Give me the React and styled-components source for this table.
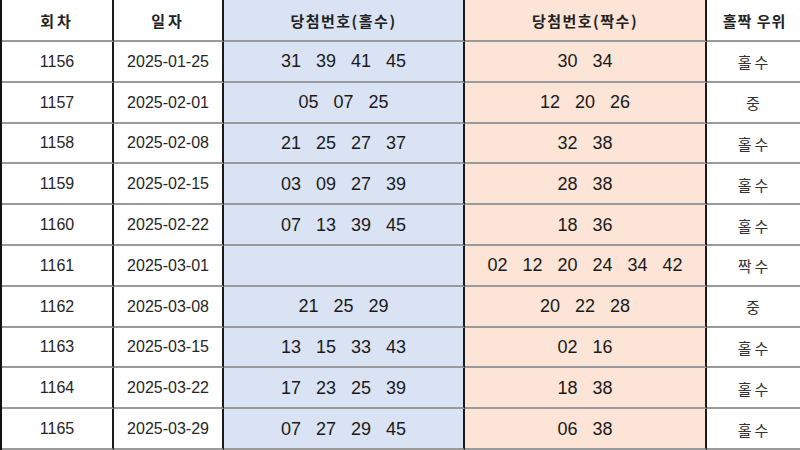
import React from "react";
import styled, { createGlobalStyle } from "styled-components";

const Global = createGlobalStyle`
  html, body { margin: 0; padding: 0; background: #ffffff; }
  body { font-family: "Liberation Sans", "Noto Sans CJK KR", sans-serif; }
`;

const Table = styled.div`
  width: 800px;
  height: 450px;
  display: grid;
  grid-template-columns: 112px 110px 241px 242px 95px;
  grid-template-rows: 42px repeat(10, 1fr);
  box-sizing: border-box;
  border-left: 2px solid #111;
  overflow: hidden;
`;

const Cell = styled.div`
  display: flex;
  align-items: center;
  justify-content: center;
  gap: 15px;
  box-sizing: border-box;
  border-right: ${(p) => (p.$last ? "0" : "2px solid #1a1a1a")};
  border-bottom: 2px solid #9a9a9a;
  background: ${(p) => p.$bg || "#ffffff"};
  color: ${(p) => p.$color || "#1a1a1a"};
  font-family: ${(p) =>
    p.$korean
      ? '"Noto Sans CJK KR", sans-serif'
      : '"Liberation Sans", "Noto Sans CJK KR", sans-serif'};
  font-size: ${(p) => p.$size || 14}px;
  font-weight: ${(p) => (p.$bold ? 700 : 400)};
  letter-spacing: ${(p) => p.$spacing || 0}px;
  white-space: nowrap;
  padding-top: 1px;
`;

const BLUE = "#dae3f3";
const PEACH = "#fce4d6";

const rows = [
  ["1156", "2025-01-25", ["31", "39", "41", "45"], ["30", "34"], "홀수"],
  ["1157", "2025-02-01", ["05", "07", "25"], ["12", "20", "26"], "중"],
  ["1158", "2025-02-08", ["21", "25", "27", "37"], ["32", "38"], "홀수"],
  ["1159", "2025-02-15", ["03", "09", "27", "39"], ["28", "38"], "홀수"],
  ["1160", "2025-02-22", ["07", "13", "39", "45"], ["18", "36"], "홀수"],
  ["1161", "2025-03-01", [], ["02", "12", "20", "24", "34", "42"], "짝수"],
  ["1162", "2025-03-08", ["21", "25", "29"], ["20", "22", "28"], "중"],
  ["1163", "2025-03-15", ["13", "15", "33", "43"], ["02", "16"], "홀수"],
  ["1164", "2025-03-22", ["17", "23", "25", "39"], ["18", "38"], "홀수"],
  ["1165", "2025-03-29", ["07", "27", "29", "45"], ["06", "38"], "홀수"],
];

const headers = [
  { t: "회차", bg: null, sp: 3 },
  { t: "일자", bg: null, sp: 3 },
  { t: "당첨번호(홀수)", bg: BLUE, sp: 1.5 },
  { t: "당첨번호(짝수)", bg: PEACH, sp: 1.5 },
  { t: "홀짝 우위", bg: null, sp: 1 },
];

export default function App() {
  return (
    <>
      <Global />
      <Table>
        {headers.map((h, i) => (
          <Cell
            key={"h" + i}
            $korean
            $bold
            $size={15}
            $bg={h.bg}
            $spacing={h.sp}
            $last={i === 4}
            $color="#222"
          >
            {h.t}
          </Cell>
        ))}
        {rows.map((r) => (
          <React.Fragment key={r[0]}>
            <Cell $size={16} $color="#262626">{r[0]}</Cell>
            <Cell $size={16} $color="#262626">{r[1]}</Cell>
            <Cell $bg={BLUE} $size={18}>
              {r[2].map((n, i) => (
                <span key={i}>{n}</span>
              ))}
            </Cell>
            <Cell $bg={PEACH} $size={18}>
              {r[3].map((n, i) => (
                <span key={i}>{n}</span>
              ))}
            </Cell>
            <Cell $korean $last $size={15} $spacing={3} $color="#333">
              {r[4]}
            </Cell>
          </React.Fragment>
        ))}
      </Table>
    </>
  );
}
